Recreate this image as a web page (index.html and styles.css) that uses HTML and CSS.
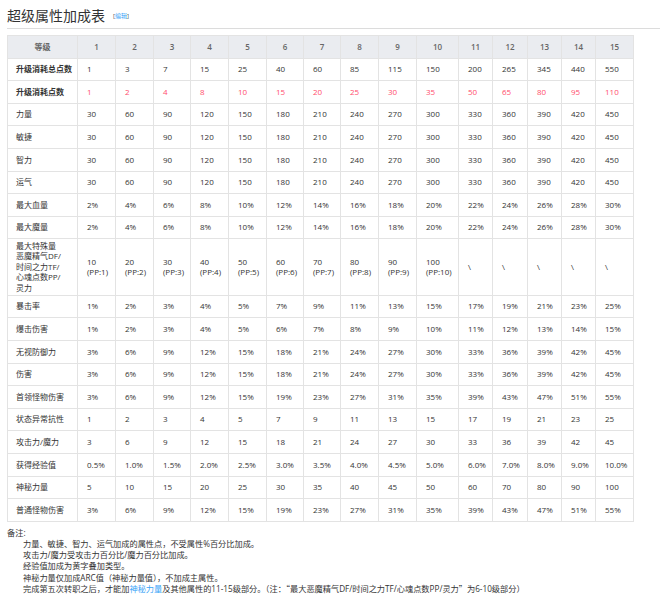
FILE: index.html
```html
<!DOCTYPE html>
<html lang="zh-CN">
<head>
<meta charset="utf-8">
<link rel="stylesheet" href="styles.css">
</head>
<body>
<div class="page">
  <h2 class="title">超级属性加成表<span class="edit">[<a class="edit-link">编辑</a>]</span></h2>
  <table class="stats">
    <colgroup>
      <col class="c-label">
      <col class="c38"><col class="c38"><col class="c37"><col class="c38"><col class="c38"><col class="c37"><col class="c37"><col class="c38"><col class="c38"><col class="c42"><col class="c34"><col class="c35"><col class="c34"><col class="c34"><col class="c38">
    </colgroup>
    <thead>
      <tr><th>等级</th><th>1</th><th>2</th><th>3</th><th>4</th><th>5</th><th>6</th><th>7</th><th>8</th><th>9</th><th>10</th><th>11</th><th>12</th><th>13</th><th>14</th><th>15</th></tr>
    </thead>
    <tbody>
      <tr><td class="label strong">升级消耗总点数</td><td>1</td><td>3</td><td>7</td><td>15</td><td>25</td><td>40</td><td>60</td><td>85</td><td>115</td><td>150</td><td>200</td><td>265</td><td>345</td><td>440</td><td>550</td></tr>
      <tr class="red"><td class="label strong">升级消耗点数</td><td>1</td><td>2</td><td>4</td><td>8</td><td>10</td><td>15</td><td>20</td><td>25</td><td>30</td><td>35</td><td>50</td><td>65</td><td>80</td><td>95</td><td>110</td></tr>
      <tr><td class="label">力量</td><td>30</td><td>60</td><td>90</td><td>120</td><td>150</td><td>180</td><td>210</td><td>240</td><td>270</td><td>300</td><td>330</td><td>360</td><td>390</td><td>420</td><td>450</td></tr>
      <tr><td class="label">敏捷</td><td>30</td><td>60</td><td>90</td><td>120</td><td>150</td><td>180</td><td>210</td><td>240</td><td>270</td><td>300</td><td>330</td><td>360</td><td>390</td><td>420</td><td>450</td></tr>
      <tr><td class="label">智力</td><td>30</td><td>60</td><td>90</td><td>120</td><td>150</td><td>180</td><td>210</td><td>240</td><td>270</td><td>300</td><td>330</td><td>360</td><td>390</td><td>420</td><td>450</td></tr>
      <tr><td class="label">运气</td><td>30</td><td>60</td><td>90</td><td>120</td><td>150</td><td>180</td><td>210</td><td>240</td><td>270</td><td>300</td><td>330</td><td>360</td><td>390</td><td>420</td><td>450</td></tr>
      <tr><td class="label">最大血量</td><td>2%</td><td>4%</td><td>6%</td><td>8%</td><td>10%</td><td>12%</td><td>14%</td><td>16%</td><td>18%</td><td>20%</td><td>22%</td><td>24%</td><td>26%</td><td>28%</td><td>30%</td></tr>
      <tr><td class="label">最大魔量</td><td>2%</td><td>4%</td><td>6%</td><td>8%</td><td>10%</td><td>12%</td><td>14%</td><td>16%</td><td>18%</td><td>20%</td><td>22%</td><td>24%</td><td>26%</td><td>28%</td><td>30%</td></tr>
      <tr class="tall"><td class="label">最大特殊量<br>恶魔精气DF/<br>时间之力TF/<br>心魂点数PP/<br>灵力</td><td>10<br>(PP:1)</td><td>20<br>(PP:2)</td><td>30<br>(PP:3)</td><td>40<br>(PP:4)</td><td>50<br>(PP:5)</td><td>60<br>(PP:6)</td><td>70<br>(PP:7)</td><td>80<br>(PP:8)</td><td>90<br>(PP:9)</td><td>100<br>(PP:10)</td><td>\</td><td>\</td><td>\</td><td>\</td><td>\</td></tr>
      <tr><td class="label">暴击率</td><td>1%</td><td>2%</td><td>3%</td><td>4%</td><td>5%</td><td>7%</td><td>9%</td><td>11%</td><td>13%</td><td>15%</td><td>17%</td><td>19%</td><td>21%</td><td>23%</td><td>25%</td></tr>
      <tr><td class="label">爆击伤害</td><td>1%</td><td>2%</td><td>3%</td><td>4%</td><td>5%</td><td>6%</td><td>7%</td><td>8%</td><td>9%</td><td>10%</td><td>11%</td><td>12%</td><td>13%</td><td>14%</td><td>15%</td></tr>
      <tr><td class="label">无视防御力</td><td>3%</td><td>6%</td><td>9%</td><td>12%</td><td>15%</td><td>18%</td><td>21%</td><td>24%</td><td>27%</td><td>30%</td><td>33%</td><td>36%</td><td>39%</td><td>42%</td><td>45%</td></tr>
      <tr><td class="label">伤害</td><td>3%</td><td>6%</td><td>9%</td><td>12%</td><td>15%</td><td>18%</td><td>21%</td><td>24%</td><td>27%</td><td>30%</td><td>33%</td><td>36%</td><td>39%</td><td>42%</td><td>45%</td></tr>
      <tr><td class="label">首领怪物伤害</td><td>3%</td><td>6%</td><td>9%</td><td>12%</td><td>15%</td><td>19%</td><td>23%</td><td>27%</td><td>31%</td><td>35%</td><td>39%</td><td>43%</td><td>47%</td><td>51%</td><td>55%</td></tr>
      <tr><td class="label">状态异常抗性</td><td>1</td><td>2</td><td>3</td><td>4</td><td>5</td><td>7</td><td>9</td><td>11</td><td>13</td><td>15</td><td>17</td><td>19</td><td>21</td><td>23</td><td>25</td></tr>
      <tr><td class="label">攻击力/魔力</td><td>3</td><td>6</td><td>9</td><td>12</td><td>15</td><td>18</td><td>21</td><td>24</td><td>27</td><td>30</td><td>33</td><td>36</td><td>39</td><td>42</td><td>45</td></tr>
      <tr><td class="label">获得经验值</td><td>0.5%</td><td>1.0%</td><td>1.5%</td><td>2.0%</td><td>2.5%</td><td>3.0%</td><td>3.5%</td><td>4.0%</td><td>4.5%</td><td>5.0%</td><td>6.0%</td><td>7.0%</td><td>8.0%</td><td>9.0%</td><td>10.0%</td></tr>
      <tr><td class="label">神秘力量</td><td>5</td><td>10</td><td>15</td><td>20</td><td>25</td><td>30</td><td>35</td><td>40</td><td>45</td><td>50</td><td>60</td><td>70</td><td>80</td><td>90</td><td>100</td></tr>
      <tr><td class="label">普通怪物伤害</td><td>3%</td><td>6%</td><td>9%</td><td>12%</td><td>15%</td><td>19%</td><td>23%</td><td>27%</td><td>31%</td><td>35%</td><td>39%</td><td>43%</td><td>47%</td><td>51%</td><td>55%</td></tr>
    </tbody>
  </table>
  <div class="notes">
    <div class="notes-head">备注:</div>
    <div class="notes-body">
      <div>力量、敏捷、智力、运气加成的属性点，不受属性%百分比加成。</div>
      <div>攻击力/魔力受攻击力百分比/魔力百分比加成。</div>
      <div>经验值加成为黄字叠加类型。</div>
      <div>神秘力量仅加成ARC值（神秘力量值），不加成主属性。</div>
      <div>完成第五次转职之后，才能加<a class="link">神秘力量</a>及其他属性的11-15级部分。（注：<span class="cjk">“</span>最大恶魔精气DF/时间之力TF/心魂点数PP/灵力<span class="cjk">”</span>为6-10级部分）</div>
    </div>
  </div>
</div>
</body>
</html>
```

FILE: styles.css
```css
html, body {
  margin: 0;
  padding: 0;
  background: #ffffff;
}
body {
  font-family: "Open Sans", "Noto Sans CJK SC", sans-serif;
  color: #333333;
}
.page {
  padding: 0 5px 0 7px;
}
.title {
  margin: 0;
  padding: 6px 0 2px 0;
  font-size: 14px;
  line-height: 20px;
  font-weight: normal;
  color: #333333;
  border-bottom: 1px solid #dcdcdc;
}
.edit {
  font-size: 6px;
  margin-left: 8px;
  color: #555555;
  vertical-align: 3px;
}
.edit-link {
  color: #36a3f7;
}
.stats {
  margin-top: 6px;
  border-collapse: collapse;
  table-layout: fixed;
  width: 626px;
  font-size: 8px;
  line-height: 10.5px;
}
.c-label { width: 70px; }
.c34 { width: 34px; }
.c35 { width: 35px; }
.c37 { width: 37px; }
.c38 { width: 38px; }
.c42 { width: 42px; }
.stats th, .stats td {
  border: 1px solid #e3e3e3;
  padding: 1.5px 0 1.5px 9px;
  text-align: left;
  vertical-align: middle;
  white-space: nowrap;
}
.stats tr {
  height: 22.6px;
}
.stats th {
  background: #eaecf0;
  color: #666666;
  font-weight: 600;
  text-align: center;
  padding-left: 0;
}
.stats td.label {
  padding-left: 8px;
  color: #333333;
}
.stats td.strong {
  font-weight: bold;
}
.stats tr.red td {
  color: #ff4d6d;
}
.stats tr.red td.label {
  color: #333333;
}
.notes {
  margin-top: 5px;
  font-size: 8.2px;
  line-height: 11.2px;
  color: #333333;
}
.notes-body {
  padding-left: 16px;
}
.cjk {
  font-family: "Noto Sans CJK SC", sans-serif;
}
.link {
  color: #36a3f7;
}
```
